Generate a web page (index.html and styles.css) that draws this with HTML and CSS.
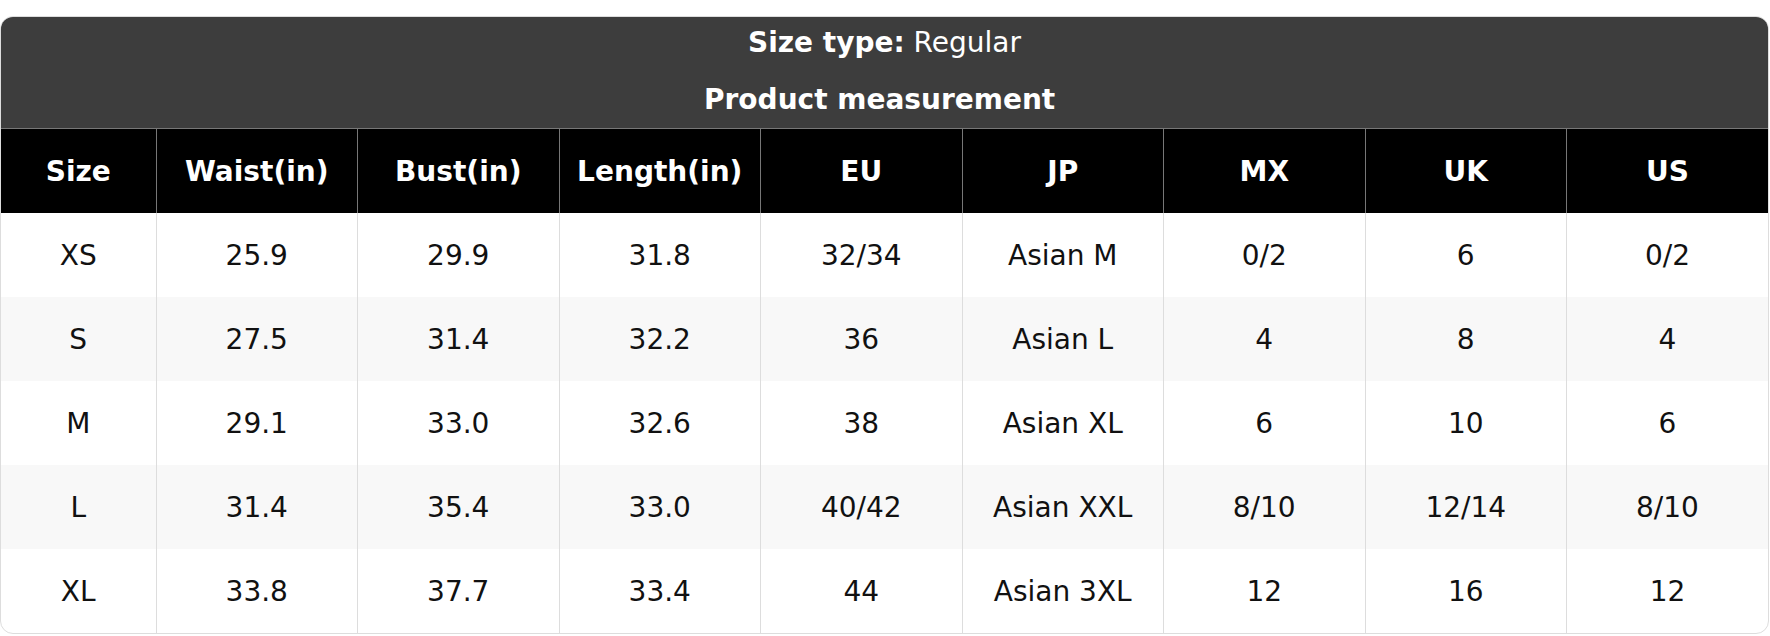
FILE: index.html
```html
<!DOCTYPE html>
<html lang="en">
<head>
<meta charset="utf-8">
<title>Size chart</title>
<link rel="stylesheet" href="styles.css">
</head>
<body>
<div class="card">
  <div class="title">
    <div class="title-line"><strong>Size type:</strong> Regular</div>
    <div class="title-line title-sub"><strong>Product measurement&nbsp;</strong></div>
  </div>
  <table class="chart">
    <colgroup>
      <col class="col-size">
      <col><col><col><col><col><col><col><col>
    </colgroup>
    <thead>
      <tr>
        <th>Size</th><th>Waist(in)</th><th>Bust(in)</th><th>Length(in)</th><th>EU</th><th>JP</th><th>MX</th><th>UK</th><th>US</th>
      </tr>
    </thead>
    <tbody>
      <tr><td>XS</td><td>25.9</td><td>29.9</td><td>31.8</td><td>32/34</td><td>Asian M</td><td>0/2</td><td>6</td><td>0/2</td></tr>
      <tr><td>S</td><td>27.5</td><td>31.4</td><td>32.2</td><td>36</td><td>Asian L</td><td>4</td><td>8</td><td>4</td></tr>
      <tr><td>M</td><td>29.1</td><td>33.0</td><td>32.6</td><td>38</td><td>Asian XL</td><td>6</td><td>10</td><td>6</td></tr>
      <tr><td>L</td><td>31.4</td><td>35.4</td><td>33.0</td><td>40/42</td><td>Asian XXL</td><td>8/10</td><td>12/14</td><td>8/10</td></tr>
      <tr><td>XL</td><td>33.8</td><td>37.7</td><td>33.4</td><td>44</td><td>Asian 3XL</td><td>12</td><td>16</td><td>12</td></tr>
    </tbody>
  </table>
</div>
</body>
</html>
```

FILE: styles.css
```css
html, body {
  margin: 0;
  padding: 0;
  background: #ffffff;
}

body {
  font-family: "DejaVu Sans", Verdana, sans-serif;
  font-size: 28px;
  color: #111111;
}

.card {
  margin: 16px 1px 0 0;
  border: 1px solid #dddddd;
  border-radius: 13px;
  overflow: hidden;
  background: #ffffff;
}

.title {
  background: #3d3d3d;
  color: #ffffff;
  text-align: center;
  padding: 9px 0 11px;
}

.title-line {
  line-height: 34px;
}

.title-sub {
  margin-top: 23px;
}

.chart {
  width: 100%;
  border-collapse: collapse;
  table-layout: fixed;
}

.col-size {
  width: 155px;
}

.chart th {
  background: #000000;
  color: #ffffff;
  font-weight: bold;
  height: 84px;
  padding: 0;
  text-align: center;
  border: 1px solid #777777;
  border-bottom: none;
}

.chart th:first-child {
  border-left: none;
}

.chart th:last-child {
  border-right: none;
}

.chart td {
  height: 84px;
  padding: 0;
  text-align: center;
  border-left: 1px solid #dddddd;
}

.chart td:first-child {
  border-left: none;
}

.chart tbody tr:nth-child(even) td {
  background: #f8f8f8;
}
```
